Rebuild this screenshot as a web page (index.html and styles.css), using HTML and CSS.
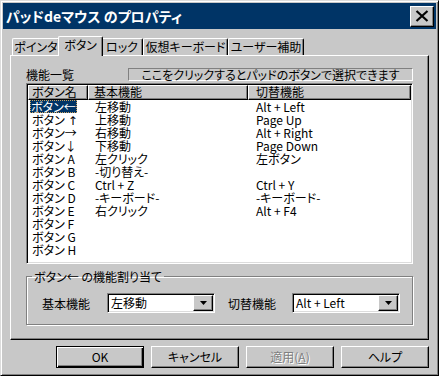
FILE: index.html
```html
<!DOCTYPE html>
<html lang="ja">
<head>
<meta charset="utf-8">
<title>パッドdeマウス のプロパティ</title>
<link rel="stylesheet" href="styles.css">
</head>
<body>
<div class="window">
  <div class="titlebar">
    <span class="title">パッドdeマウス のプロパティ</span>
    <div class="close">
      <svg width="14" height="12" viewBox="0 0 14 12"><path d="M1.5 1 L12.5 11 M12.5 1 L1.5 11" stroke="#000" stroke-width="2.2" fill="none"/></svg>
    </div>
  </div>
  <div class="content">
    <div class="tabs">
      <div class="tab w-pointer">ポインタ</div>
      <div class="tab active w-button">ボタン</div>
      <div class="tab w-lock">ロック</div>
      <div class="tab w-kbd">仮想キーボード</div>
      <div class="tab w-access">ユーザー補助</div>
    </div>
    <div class="panel">
      <div class="list-head">
        <span class="label">機能一覧</span>
        <div class="banner">ここをクリックするとパッドのボタンで選択できます</div>
      </div>
      <div class="listview">
        <div class="lv-header">
          <div class="hcell c1">ボタン名</div>
          <div class="hcell c2">基本機能</div>
          <div class="hcell c3">切替機能</div>
        </div>
        <div class="lv-body">
          <div class="row"><span class="cell c1"><span class="sel">ボタン<span class="arw">←</span></span></span><span class="cell c2">左移動</span><span class="cell c3">Alt + Left</span></div>
          <div class="row"><span class="cell c1"><span class="item">ボタン<span class="arw-up">↑</span></span></span><span class="cell c2">上移動</span><span class="cell c3">Page Up</span></div>
          <div class="row"><span class="cell c1"><span class="item">ボタン<span class="arw">→</span></span></span><span class="cell c2">右移動</span><span class="cell c3">Alt + Right</span></div>
          <div class="row"><span class="cell c1"><span class="item">ボタン<span class="arw">↓</span></span></span><span class="cell c2">下移動</span><span class="cell c3">Page Down</span></div>
          <div class="row"><span class="cell c1"><span class="item">ボタン A</span></span><span class="cell c2">左クリック</span><span class="cell c3">左ボタン</span></div>
          <div class="row"><span class="cell c1"><span class="item">ボタン B</span></span><span class="cell c2">-切り替え-</span><span class="cell c3"></span></div>
          <div class="row"><span class="cell c1"><span class="item">ボタン C</span></span><span class="cell c2">Ctrl + Z</span><span class="cell c3">Ctrl + Y</span></div>
          <div class="row"><span class="cell c1"><span class="item">ボタン D</span></span><span class="cell c2">-キーボード-</span><span class="cell c3">-キーボード-</span></div>
          <div class="row"><span class="cell c1"><span class="item">ボタン E</span></span><span class="cell c2">右クリック</span><span class="cell c3">Alt + F4</span></div>
          <div class="row"><span class="cell c1"><span class="item">ボタン F</span></span><span class="cell c2"></span><span class="cell c3"></span></div>
          <div class="row"><span class="cell c1"><span class="item">ボタン G</span></span><span class="cell c2"></span><span class="cell c3"></span></div>
          <div class="row"><span class="cell c1"><span class="item">ボタン H</span></span><span class="cell c2"></span><span class="cell c3"></span></div>
        </div>
      </div>
      <fieldset class="group">
        <legend>ボタン<span class="arw">←</span> の機能割り当て</legend>
        <div class="assign">
          <span class="flabel">基本機能</span>
          <div class="combo">
            <span class="combo-text">左移動</span>
            <span class="drop"><svg width="7" height="4" viewBox="0 0 7 4"><path d="M0 0 H7 L3.5 4 Z" fill="#000"/></svg></span>
          </div>
          <span class="flabel second">切替機能</span>
          <div class="combo">
            <span class="combo-text">Alt + Left</span>
            <span class="drop"><svg width="7" height="4" viewBox="0 0 7 4"><path d="M0 0 H7 L3.5 4 Z" fill="#000"/></svg></span>
          </div>
        </div>
      </fieldset>
    </div>
    <div class="buttons">
      <div class="btn default">OK</div>
      <div class="btn">キャンセル</div>
      <div class="btn disabled">適用(<u>A</u>)</div>
      <div class="btn">ヘルプ</div>
    </div>
  </div>
</div>
</body>
</html>
```

FILE: styles.css
```css
* { box-sizing: border-box; }
html, body { margin: 0; padding: 0; }
body {
  width: 439px;
  height: 376px;
  overflow: hidden;
  background: #c8c8c8;
  font-family: "Noto Sans CJK JP", "Noto Sans", sans-serif;
  font-size: 12px;
  font-feature-settings: "palt";
  color: #000;
}
.arw {
  font-family: "Noto Sans CJK JP", "DejaVu Sans", sans-serif;
  font-feature-settings: normal;
}
.arw-up {
  font-family: "DejaVu Sans", sans-serif;
  padding: 0 2px 0 3px;
}
.window {
  width: 439px;
  height: 376px;
  background: #c8c8c8;
  border: 1px solid;
  border-color: #dcdcdc #000 #000 #dcdcdc;
  box-shadow: inset 1px 1px #fff, inset -1px -1px #808080;
  padding: 2px;
  display: flex;
  flex-direction: column;
}
.titlebar {
  height: 26px;
  flex: none;
  background: #003466;
  display: flex;
  align-items: center;
  justify-content: space-between;
  padding: 0 2px 0 3px;
}
.title {
  color: #fff;
  font-size: 14px;
  font-weight: bold;
  line-height: 20px;
}
.close {
  width: 24px;
  height: 21px;
  background: #c8c8c8;
  border: 1px solid;
  border-color: #fff #000 #000 #fff;
  box-shadow: inset -1px -1px #808080;
  display: flex;
  align-items: center;
  justify-content: center;
}
.close svg { display: block; }
.content {
  flex: 1;
  padding: 7px 7px 0;
  display: flex;
  flex-direction: column;
}
.tabs {
  height: 19px;
  flex: none;
  display: flex;
  align-items: flex-end;
  padding-left: 2px;
  position: relative;
  z-index: 1;
}
.tab {
  height: 17px;
  line-height: 15px;
  text-align: center;
  background: #c8c8c8;
  border-top: 1px solid #fff;
  border-left: 1px solid #fff;
  border-right: 1px solid #000;
  box-shadow: inset -1px 0 #808080;
  border-radius: 2px 2px 0 0;
}
.tab.active {
  height: 20px;
  margin: 0 -2px -1px;
  position: relative;
  z-index: 2;
  line-height: 16px;
}
.w-pointer { width: 48px; }
.w-button { width: 45px; }
.w-lock { width: 42px; }
.w-kbd { width: 85px; }
.w-access { width: 76px; }
.panel {
  height: 285px;
  flex: none;
  border: 1px solid;
  border-color: #fff #000 #000 #fff;
  box-shadow: inset -1px -1px #808080;
  padding: 12px 15px 0 15px;
  display: flex;
  flex-direction: column;
}
.list-head {
  height: 13px;
  display: flex;
  align-items: flex-end;
}
.label { line-height: 13px; }
.banner {
  margin-left: auto;
  width: 285px;
  height: 13px;
  border: 1px solid;
  border-color: #808080 #fff #fff #808080;
  text-align: center;
  line-height: 11px;
  font-size: 12px;
  white-space: nowrap;
}
.listview {
  margin-top: 2px;
  height: 181px;
  background: #fff;
  border: 1px solid;
  border-color: #808080 #fff #fff #808080;
  box-shadow: inset 1px 1px #000, inset -1px -1px #dcdcdc;
  padding: 1px;
  display: flex;
  flex-direction: column;
}
.lv-header {
  display: grid;
  grid-template-columns: 60px 160px 1fr;
  height: 15px;
}
.hcell {
  background: #c8c8c8;
  border-top: 1px solid #fff;
  border-left: 1px solid #fff;
  border-right: 1px solid #000;
  border-bottom: 1px solid #000;
  box-shadow: inset -1px -1px #808080;
  line-height: 12px;
  white-space: nowrap;
}
.hcell.c1 { padding-left: 3px; }
.hcell.c2 { padding-left: 5px; }
.hcell.c3 { padding-left: 7px; }
.lv-body { display: flex; flex-direction: column; }
.row {
  display: grid;
  grid-template-columns: 60px 160px 1fr;
  height: 13px;
  line-height: 13px;
  white-space: nowrap;
}
.cell.c1 { padding-left: 2px; }
.cell.c2 { padding-left: 7px; }
.cell.c3 { padding-left: 8px; }
.item { padding: 0 2px; }
.sel {
  display: inline-block;
  height: 13px;
  padding: 0 1px;
  background: #003466;
  color: #fff;
  outline: 1px dotted #c8a060;
  outline-offset: -1px;
}
.group {
  margin: 6px 0 0 0;
  padding: 0;
  height: 55px;
  min-width: 0;
  border: 1px solid #808080;
  box-shadow: inset 1px 1px #fff, 1px 1px #fff;
}
.group legend {
  margin-left: 5px;
  padding: 0 2px;
  line-height: 13px;
}
.assign {
  display: flex;
  align-items: center;
  padding: 10px 0 0 15px;
}
.flabel {
  width: 65px;
  line-height: 13px;
}
.flabel.second {
  width: 64px;
  margin-left: 13px;
}
.combo {
  width: 108px;
  height: 20px;
  background: #fff;
  border: 1px solid;
  border-color: #808080 #fff #fff #808080;
  box-shadow: inset 1px 1px #000, inset -1px -1px #dcdcdc;
  padding: 1px;
  display: flex;
  align-items: center;
}
.combo-text {
  flex: 1;
  padding-left: 2px;
  line-height: 16px;
}
.drop {
  width: 20px;
  height: 16px;
  background: #c8c8c8;
  border: 1px solid;
  border-color: #fff #000 #000 #fff;
  box-shadow: inset -1px -1px #808080;
  display: flex;
  align-items: center;
  justify-content: center;
}
.drop svg { display: block; }
.buttons {
  margin-top: 6px;
  display: flex;
  justify-content: flex-end;
  gap: 7px;
}
.btn {
  width: 88px;
  height: 22px;
  line-height: 20px;
  text-align: center;
  background: #c8c8c8;
  border: 1px solid;
  border-color: #fff #000 #000 #fff;
  box-shadow: inset -1px -1px #808080;
}
.btn.default {
  border-color: #000;
  box-shadow: inset 1px 1px #fff, inset -1px -1px #000, inset -2px -2px #808080;
}
.btn.disabled {
  color: #808080;
  text-shadow: 1px 1px #fff;
}
```
